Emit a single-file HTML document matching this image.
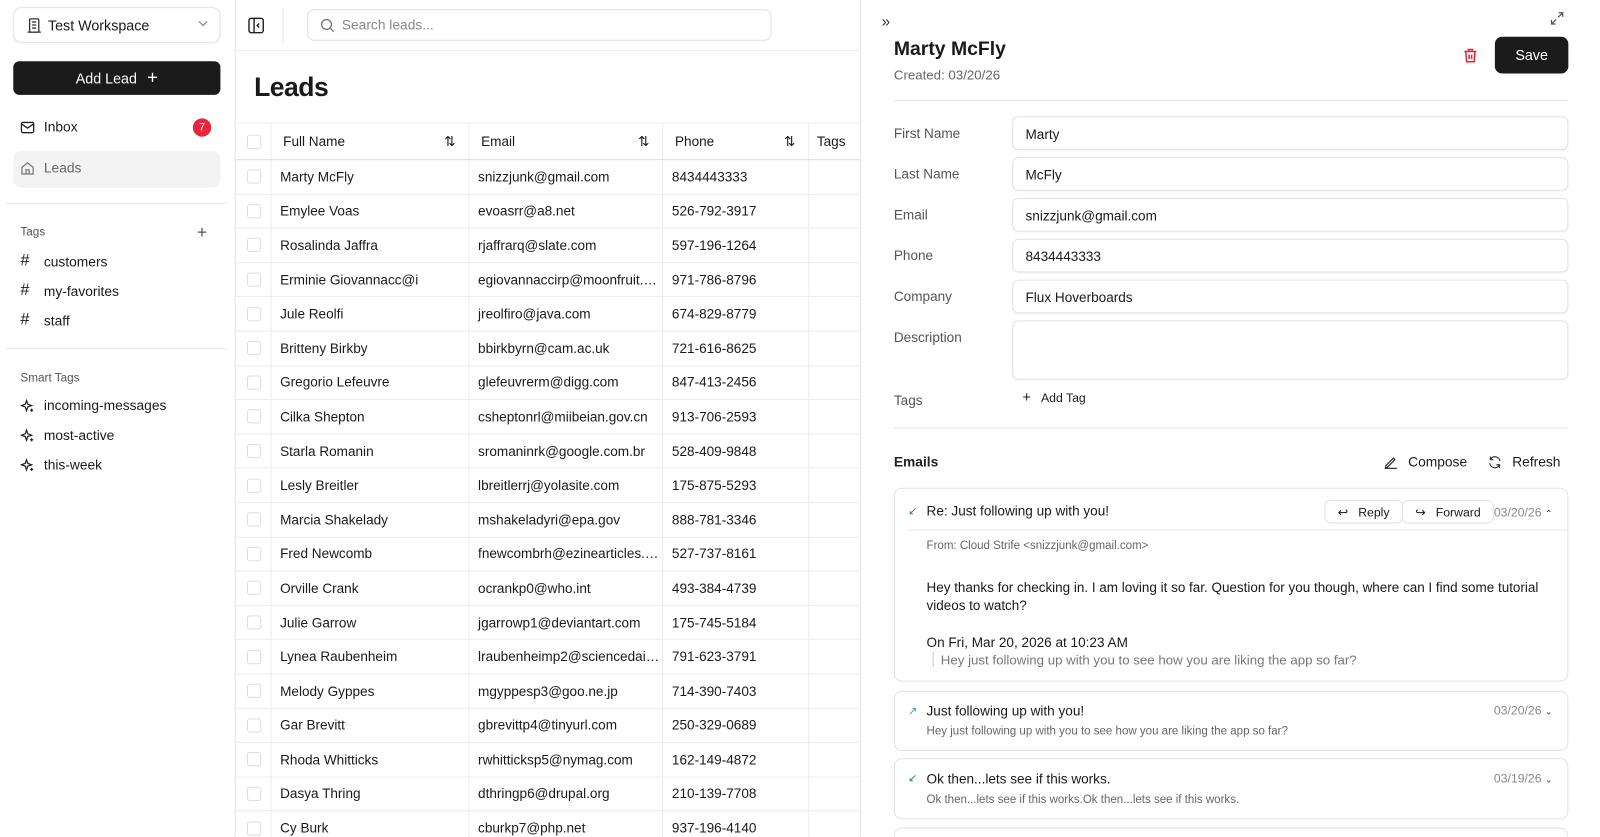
<!DOCTYPE html>
<html><head><meta charset="utf-8"><style>
*{box-sizing:border-box;margin:0;padding:0}
html,body{width:1600px;height:837px;overflow:hidden}
body{font-family:"Liberation Sans",Arial,sans-serif;color:#1a1a1a;background:#fff;position:relative;font-size:14px}
#w{position:absolute;left:0;top:0;width:1568px;height:820px;transform:scale(1.0204);transform-origin:0 0;overflow:hidden}
.abs{position:absolute}
svg{display:block}
.side{left:0;top:0;width:231px;height:820px;border-right:1px solid #e5e5e5}
.ws{left:13px;top:7px;width:203px;height:35px;border:1px solid #e3e3e3;border-radius:8px;box-shadow:0 1px 2px rgba(0,0,0,.05)}
.nav{left:20px;font-size:13.5px;display:flex;align-items:center;gap:9px}
.panel{left:843px;top:0;width:725px;height:820px;border-left:1px solid #e5e5e5}
.tw{position:absolute;left:231px;top:120px;width:612px;height:700px;overflow:hidden}
table{border-collapse:collapse;table-layout:fixed;width:620px}
td,th{height:33.6px;border-bottom:1px solid #ececec;border-right:1px solid #ececec;font-size:13.3px;text-align:left;padding-left:9px;white-space:nowrap;overflow:hidden;text-overflow:ellipsis;font-weight:normal}
th{height:36px;border-top:1px solid #ececec;border-bottom:1.5px solid #ddd;padding-left:12px}
.cb{width:14px;height:14px;border:1px solid #ddd;border-radius:3px;margin-left:2px}
.lbl{left:876px;font-size:13.3px;color:#555}
.inp{left:992px;width:545px;height:33px;border:1px solid #e2e2e2;border-radius:6px;font-size:13.3px;padding:9px 12px;box-shadow:0 1px 2px rgba(0,0,0,.04)}
.card{left:876px;width:661px;border:1px solid #e2e2e2;border-radius:8px}
.btn{border:1px solid #e2e2e2;border-radius:6px;height:23px;font-size:12px;display:flex;align-items:center;gap:10px;padding:0 12px}
</style></head><body><div id="w">
<div class="abs side"></div>
<div class="abs ws"><div class="abs" style="left:12px;top:9px"><svg width="15" height="16" viewBox="0 0 15 16" fill="none" stroke="#333" stroke-width="1.3"><rect x="3" y="1.5" width="9" height="13" rx="1"/><path d="M1 14.5h13M5.5 4.5h4M5.5 7.5h4M5.5 10.5h4"/></svg></div><div class="abs" style="left:33px;top:9px;font-size:14px">Test Workspace</div><div class="abs" style="left:180px;top:12px"><svg width="10" height="6" viewBox="0 0 10 6"><path d="M1 1l4 4 4-4" stroke="#888" fill="none" stroke-width="1.2"/></svg></div></div>
<div class="abs" style="left:13px;top:60px;width:203px;height:33px;background:#1b1b1b;border-radius:6px;color:#fff;font-size:14px;display:flex;align-items:center;justify-content:center;gap:10px">Add Lead <span style="font-size:18px;font-weight:300">+</span></div>
<div class="abs nav" style="top:117px"><svg width="14" height="12" viewBox="0 0 14 12" fill="none" stroke="#222" stroke-width="1.3"><rect x="1" y="1" width="12" height="10" rx="1.5"/><path d="M1 2.5l6 4 6-4"/></svg>Inbox</div>
<div class="abs" style="left:189px;top:116px;width:18px;height:18px;border-radius:50%;background:#e8253a;color:#fff;font-size:11px;text-align:center;line-height:18px">7</div>
<div class="abs" style="left:13px;top:148px;width:203px;height:36px;background:#f3f3f3;border-radius:8px"></div>
<div class="abs nav" style="top:157px;color:#666"><svg width="14" height="14" viewBox="0 0 14 14" fill="none" stroke="#777" stroke-width="1.2"><path d="M1.5 6L7 1.5 12.5 6v6.5h-11z"/><path d="M5.5 12.5V8.5h3v4"/></svg>Leads</div>
<div class="abs" style="left:6px;top:199px;width:217px;border-top:1px solid #e5e5e5"></div>
<div class="abs" style="left:20px;top:222px;font-size:11.5px;color:#555">Tags</div>
<div class="abs" style="left:193px;top:218px;font-size:17px;color:#555;font-weight:300">+</div>
<div class="abs nav" style="top:247px"><b style="font-weight:normal;font-size:16px;width:14px">#</b>customers</div>
<div class="abs nav" style="top:276px"><b style="font-weight:normal;font-size:16px;width:14px">#</b>my-favorites</div>
<div class="abs nav" style="top:305px"><b style="font-weight:normal;font-size:16px;width:14px">#</b>staff</div>
<div class="abs" style="left:6px;top:341px;width:217px;border-top:1px solid #e5e5e5"></div>
<div class="abs" style="left:20px;top:365px;font-size:11.5px;color:#555">Smart Tags</div>
<div class="abs nav" style="top:390px"><svg width="14" height="14" viewBox="0 0 14 14" fill="none" stroke="#222" stroke-width="1.2"><path d="M6 1.5l1.2 3.6L11 6.5 7.2 7.8 6 11.5 4.8 7.8 1 6.5l3.8-1.4z"/><path d="M11 9.5v3M9.5 11h3"/></svg>incoming-messages</div>
<div class="abs nav" style="top:419px"><svg width="14" height="14" viewBox="0 0 14 14" fill="none" stroke="#222" stroke-width="1.2"><path d="M6 1.5l1.2 3.6L11 6.5 7.2 7.8 6 11.5 4.8 7.8 1 6.5l3.8-1.4z"/><path d="M11 9.5v3M9.5 11h3"/></svg>most-active</div>
<div class="abs nav" style="top:448px"><svg width="14" height="14" viewBox="0 0 14 14" fill="none" stroke="#222" stroke-width="1.2"><path d="M6 1.5l1.2 3.6L11 6.5 7.2 7.8 6 11.5 4.8 7.8 1 6.5l3.8-1.4z"/><path d="M11 9.5v3M9.5 11h3"/></svg>this-week</div>

<div class="abs" style="left:243px;top:17px"><svg width="16" height="16" viewBox="0 0 16 16" fill="none" stroke="#222" stroke-width="1.4"><rect x="1" y="1" width="14" height="14" rx="2"/><path d="M6 1v14M11 6l-2 2 2 2"/></svg></div>
<div class="abs" style="left:277px;top:8px;height:34px;border-left:1px solid #e5e5e5"></div>
<div class="abs" style="left:301px;top:9px;width:455px;height:31px;border:1px solid #e2e2e2;border-radius:7px"><div class="abs" style="left:12px;top:8px"><svg width="14" height="14" viewBox="0 0 14 14" fill="none" stroke="#777" stroke-width="1.3"><circle cx="6" cy="6" r="4.8"/><path d="M9.5 9.5L13 13"/></svg></div><div class="abs" style="left:33px;top:7px;color:#888;font-size:13.5px">Search leads...</div></div>
<div class="abs" style="left:231px;top:49px;width:612px;border-top:1px solid #ececec"></div>
<div class="abs" style="left:249px;top:70px;font-size:26px;font-weight:bold;letter-spacing:-.5px">Leads</div>
<div class="tw"><table>
<colgroup><col style="width:34px"><col style="width:194px"><col style="width:190px"><col style="width:143px"><col style="width:59px"></colgroup>
<tr><th style="padding-left:9px"><div class="cb"></div></th><th>Full Name<span style="float:right;margin-right:12px">⇅</span></th><th>Email<span style="float:right;margin-right:12px">⇅</span></th><th>Phone<span style="float:right;margin-right:12px">⇅</span></th><th style="padding-left:8px">Tags</th></tr>
<tr><td><div class="cb"></div></td><td>Marty McFly</td><td>snizzjunk@gmail.com</td><td>8434443333</td><td></td></tr>
<tr><td><div class="cb"></div></td><td>Emylee Voas</td><td>evoasrr@a8.net</td><td>526-792-3917</td><td></td></tr>
<tr><td><div class="cb"></div></td><td>Rosalinda Jaffra</td><td>rjaffrarq@slate.com</td><td>597-196-1264</td><td></td></tr>
<tr><td><div class="cb"></div></td><td>Erminie Giovannacc@i</td><td>egiovannaccirp@moonfruit.com</td><td>971-786-8796</td><td></td></tr>
<tr><td><div class="cb"></div></td><td>Jule Reolfi</td><td>jreolfiro@java.com</td><td>674-829-8779</td><td></td></tr>
<tr><td><div class="cb"></div></td><td>Britteny Birkby</td><td>bbirkbyrn@cam.ac.uk</td><td>721-616-8625</td><td></td></tr>
<tr><td><div class="cb"></div></td><td>Gregorio Lefeuvre</td><td>glefeuvrerm@digg.com</td><td>847-413-2456</td><td></td></tr>
<tr><td><div class="cb"></div></td><td>Cilka Shepton</td><td>csheptonrl@miibeian.gov.cn</td><td>913-706-2593</td><td></td></tr>
<tr><td><div class="cb"></div></td><td>Starla Romanin</td><td>sromaninrk@google.com.br</td><td>528-409-9848</td><td></td></tr>
<tr><td><div class="cb"></div></td><td>Lesly Breitler</td><td>lbreitlerrj@yolasite.com</td><td>175-875-5293</td><td></td></tr>
<tr><td><div class="cb"></div></td><td>Marcia Shakelady</td><td>mshakeladyri@epa.gov</td><td>888-781-3346</td><td></td></tr>
<tr><td><div class="cb"></div></td><td>Fred Newcomb</td><td>fnewcombrh@ezinearticles.com</td><td>527-737-8161</td><td></td></tr>
<tr><td><div class="cb"></div></td><td>Orville Crank</td><td>ocrankp0@who.int</td><td>493-384-4739</td><td></td></tr>
<tr><td><div class="cb"></div></td><td>Julie Garrow</td><td>jgarrowp1@deviantart.com</td><td>175-745-5184</td><td></td></tr>
<tr><td><div class="cb"></div></td><td>Lynea Raubenheim</td><td>lraubenheimp2@sciencedaily.com</td><td>791-623-3791</td><td></td></tr>
<tr><td><div class="cb"></div></td><td>Melody Gyppes</td><td>mgyppesp3@goo.ne.jp</td><td>714-390-7403</td><td></td></tr>
<tr><td><div class="cb"></div></td><td>Gar Brevitt</td><td>gbrevittp4@tinyurl.com</td><td>250-329-0689</td><td></td></tr>
<tr><td><div class="cb"></div></td><td>Rhoda Whitticks</td><td>rwhitticksp5@nymag.com</td><td>162-149-4872</td><td></td></tr>
<tr><td><div class="cb"></div></td><td>Dasya Thring</td><td>dthringp6@drupal.org</td><td>210-139-7708</td><td></td></tr>
<tr><td><div class="cb"></div></td><td>Cy Burk</td><td>cburkp7@php.net</td><td>937-196-4140</td><td></td></tr>
</table></div>

<div class="abs panel" style="background:#fff"></div>
<div class="abs" style="left:864px;top:13px;font-size:15px;color:#333">»</div>
<div class="abs" style="left:1519px;top:11px"><svg width="14" height="14" viewBox="0 0 14 14" fill="none" stroke="#555" stroke-width="1.2"><path d="M8.5 1.5h4v4M12.5 1.5L8 6M5.5 12.5h-4v-4M1.5 12.5L6 8"/></svg></div>
<div class="abs" style="left:876px;top:38px;font-size:19px;font-weight:bold">Marty McFly</div>
<div class="abs" style="left:876px;top:66px;font-size:13px;color:#666">Created: 03/20/26</div>
<div class="abs" style="left:1434px;top:47px"><svg width="14" height="15" viewBox="0 0 14 15" fill="none" stroke="#e8253a" stroke-width="1.5"><path d="M1 3.5h12M5 3.5V1.5h4v2M2.5 3.5l.8 10h7.4l.8-10M5.8 6.5v4.5M8.2 6.5v4.5"/></svg></div>
<div class="abs" style="left:1465px;top:36px;width:72px;height:36px;background:#1b1b1b;color:#fff;border-radius:7px;font-size:14px;text-align:center;line-height:36px">Save</div>
<div class="abs" style="left:876px;top:98px;width:661px;border-top:1px solid #e5e5e5"></div>
<div class="abs lbl" style="top:123px">First Name</div><div class="abs inp" style="top:114px">Marty</div>
<div class="abs lbl" style="top:163px">Last Name</div><div class="abs inp" style="top:154px">McFly</div>
<div class="abs lbl" style="top:203px">Email</div><div class="abs inp" style="top:194px">snizzjunk@gmail.com</div>
<div class="abs lbl" style="top:243px">Phone</div><div class="abs inp" style="top:234px">8434443333</div>
<div class="abs lbl" style="top:283px">Company</div><div class="abs inp" style="top:274px">Flux Hoverboards</div>
<div class="abs lbl" style="top:323px">Description</div><div class="abs inp" style="top:314px;height:58px"></div>
<div class="abs lbl" style="top:385px">Tags</div>
<div class="abs" style="left:1002px;top:383px;font-size:12px;display:flex;gap:10px"><span style="font-size:14px;line-height:13px">+</span>Add Tag</div>
<div class="abs" style="left:876px;top:419px;width:661px;border-top:1px solid #e5e5e5"></div>
<div class="abs" style="left:876px;top:445px;font-size:13.5px;font-weight:bold;color:#222">Emails</div>
<div class="abs" style="left:1356px;top:445px;font-size:13.5px;display:flex;gap:10px;align-items:center"><svg width="14" height="14" viewBox="0 0 14 14" fill="none" stroke="#333" stroke-width="1.2"><path d="M2 10.5L9.5 3l1.5 1.5L3.5 12H2zM1 13h12"/></svg>Compose</div>
<div class="abs" style="left:1458px;top:445px;font-size:13.5px;display:flex;gap:10px;align-items:center"><svg width="14" height="14" viewBox="0 0 14 14" fill="none" stroke="#333" stroke-width="1.2"><path d="M12 6A5 5 0 0 0 2.5 4.5M2 8a5 5 0 0 0 9.5 1.5M2.5 1.5v3h3M11.5 12.5v-3h-3"/></svg>Refresh</div>

<div class="abs card" style="top:478px;height:190px">
<div class="abs" style="left:13px;top:15px;color:#3a7aa0;font-size:11px">↙</div>
<div class="abs" style="left:31px;top:14px;font-size:13.3px">Re: Just following up with you!</div>
<div class="abs btn" style="left:421px;top:11px"><span>↩</span>Reply</div>
<div class="abs btn" style="left:497px;top:11px"><span>↪</span>Forward</div>
<div class="abs" style="left:587px;top:16px;font-size:12px;color:#888">03/20/26 <span style="font-size:9px;color:#333">⌃</span></div>
<div class="abs" style="left:13px;top:40px;width:647px;border-top:1px solid #e8e8e8"></div>
<div class="abs" style="left:31px;top:50px;font-size:11.3px;color:#666">From: Cloud Strife &lt;snizzjunk@gmail.com&gt;</div>
<div class="abs" style="left:31px;top:88px;font-size:13.2px;line-height:18px;width:620px">Hey thanks for checking in. I am loving it so far. Question for you though, where can I find some tutorial videos to watch?</div>
<div class="abs" style="left:31px;top:143px;font-size:13.3px">On Fri, Mar 20, 2026 at 10:23 AM</div>
<div class="abs" style="left:37px;top:160px;border-left:1px solid #ccc;padding-left:7px;font-size:13px;color:#777">Hey just following up with you to see how you are liking the app so far?</div>
</div>
<div class="abs card" style="top:677px;height:59px">
<div class="abs" style="left:13px;top:12px;color:#3a9ad0;font-size:11px">↗</div>
<div class="abs" style="left:31px;top:11px;font-size:13.3px">Just following up with you!</div>
<div class="abs" style="left:587px;top:11px;font-size:12px;color:#888">03/20/26 <span style="font-size:9px;color:#333">⌄</span></div>
<div class="abs" style="left:31px;top:33px;font-size:11.3px;color:#666">Hey just following up with you to see how you are liking the app so far?</div>
</div>
<div class="abs card" style="top:743px;height:60px">
<div class="abs" style="left:13px;top:12px;color:#3a7aa0;font-size:11px">↙</div>
<div class="abs" style="left:31px;top:12px;font-size:13.3px">Ok then...lets see if this works.</div>
<div class="abs" style="left:587px;top:12px;font-size:12px;color:#888">03/19/26 <span style="font-size:9px;color:#333">⌄</span></div>
<div class="abs" style="left:31px;top:34px;font-size:11.3px;color:#666">Ok then...lets see if this works.Ok then...lets see if this works.</div>
</div>
<div class="abs card" style="top:811px;height:9px;border-bottom:none;border-radius:8px 8px 0 0"></div>
</div></body></html>
